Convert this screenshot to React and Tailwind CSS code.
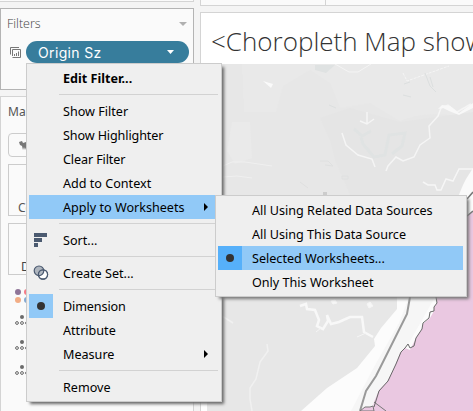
import React from 'react';

const sortIcon = (
  <svg width="14" height="14" viewBox="0 0 14 14" fill="#4b5a70">
    <path d="M0 0h13v4H0zM0 5h8v4H0zM0 10h4v4H0z" />
  </svg>
);

const setIcon = (
  <svg width="16" height="16" viewBox="0 0 16 16" fill="none">
    <circle cx="10" cy="9.5" r="4.6" fill="#fff" stroke="#4b5a70" strokeWidth="1.2" />
    <circle cx="6" cy="5.8" r="4.8" fill="#8b95a3" fillOpacity=".65" stroke="#4b5a70" strokeWidth="1.2" />
    <circle cx="10" cy="9.5" r="4.6" stroke="#4b5a70" strokeWidth="1.2" />
  </svg>
);

const dot = <span className="h-2 w-2 rounded-full bg-[#333]" />;

const items = [
  { label: 'Edit Filter...', bold: true },
  null,
  { label: 'Show Filter' },
  { label: 'Show Highlighter', tight: true },
  { label: 'Clear Filter', tight: true },
  { label: 'Add to Context' },
  { label: 'Apply to Worksheets', more: true, active: true },
  null,
  { label: 'Sort...' },
  null,
  { label: 'Create Set...' },
  null,
  { label: 'Dimension', icon: dot, checked: true, tight: true },
  { label: 'Attribute' },
  { label: 'Measure', more: true },
  null,
  { label: 'Remove' },
];
items[8].icon = sortIcon;
items[10].icon = setIcon;

const subItems = [
  { label: 'All Using Related Data Sources' },
  { label: 'All Using This Data Source' },
  { label: 'Selected Worksheets...', icon: dot, checked: true, active: true },
  { label: 'Only This Worksheet' },
];

function Row({ item }) {
  return (
    <div className={`flex h-6 items-center ${item.active ? 'bg-[#91c9f7]' : ''}`}>
      <div className={`flex h-6 w-6 shrink-0 items-center justify-center ${item.checked ? (item.active ? 'bg-[#56b0fa]' : 'bg-[#91c9f7]') : ''}`}>
        {item.icon}
      </div>
      <span className={`ml-2.5 flex-1 pt-0.5 leading-[22px] whitespace-nowrap ${item.bold ? 'font-bold' : ''} ${item.tight ? 'tracking-[-0.12px]' : ''}`}>{item.label}</span>
      {item.more && (
        <svg className="mr-[11px]" width="4" height="8" viewBox="0 0 4 8"><path d="M0 0L4 4L0 8z" fill="#000" /></svg>
      )}
    </div>
  );
}

function MapView() {
  return (
    <svg className="block" width="266" height="347" viewBox="207 64 266 347" fill="none">
      <path d="M207 64H473V411H207z" fill="#e7e7e7" />
      <path d="M242 64H473V120Q430 108 400 121L370 103 340 108 330 83 310 70 283 86 276 112 244 112z" fill="#e9e9e9" />
      <path d="M320 118L350 108 400 122 473 112V197H351L335 160 330 140z" fill="#e5e5e5" />
      <path d="M232 122H250L252 158 235 164 227 151z" fill="#eaeaea" />
      <path d="M315 65h20l-9 8-11-3z" fill="#dfe2e2" />
      <path d="M335 64l14 8h9l13-8" stroke="#f4f4f4" />
      <path d="M263 81l10 3-2 4z" fill="#fafafa" />
      <path d="M403 73l4 8 42-15" stroke="#f5f5f5" strokeDasharray="3 1" />
      <path d="M425 73l5 13 6 6M430 77l3 10M403 95l8 2M329 105l7 3M404 84l6-2" stroke="#dcdfdf" />
      <path d="M367 112v11M360 121l7 3 7-5" stroke="#f5f5f5" strokeWidth="1.5" />
      <path d="M354 129l8 7 9-5M361 137l2 7 11 13 11-2 4-20 16-2-3 13-10 8" stroke="#e0e3e3" strokeWidth="3" />
      <path d="M342 133l4 12 12 10 14 4 3 8" stroke="#f5f5f5" strokeWidth="1.5" />
      <path d="M386 171l2-5 8-9 7 4 11-4 6-12 10-7-1-12 9-10 3-8 7-3 9 7 14-8" stroke="#f5f5f5" strokeWidth="1.5" />
      <path d="M438 109l4-4 8 1 9 7 14-10v5l-14 7-10-4-6-3z" fill="#f8f8f8" />
      <path d="M423 182l5 3 7 0 2 5h4l5-11 7 2 6-12h14" stroke="#f6f6f6" strokeWidth="1.5" />
      <path d="M473 168l-7 11-3 6-5 12h15z" fill="#fafafa" />
      <path d="M223 166l9-4h13l27 4M223 177l14-1 15 2" stroke="#f0f0f0" />
      <path d="M320 161l8 0 5 5-8-1M300 182l8 6M342 176h6v3h-6z" stroke="#dfe0e0" />
      <path d="M323 192h4v4h-4z" fill="#ccc" />
      <path d="M222 316l11 7M267 344l1 7-8 11-4 17-6 9 0 11 2 12" stroke="#f1f1f1" strokeWidth="1.5" />
      <path d="M397 297V309L381 328 374 339 375 346 357 368 327 388 301 411H473V195H465z" fill="#fcfcfc" />
      <path d="M409 297L399 323 374 367 351 411H374L401 357 435 297z" fill="#f6f6f6" />
      <path d="M300 306l6-2 1 5 8 1 4 10-2 6 6 3 5-8-1-6 4 9 8-2 11-5h12l2 15 9 5" stroke="#f8f8f8" strokeWidth="2.5" />
      <path d="M367 304l3-2 3 4-4 2zM331 301l4-1 2 3-4 1zM357 337l9-4M316 332l5-4" fill="#f7f7f7" stroke="#f5f5f5" />
      <path d="M473 212L466 216V267L436 297 437 303 434 307 434 311 430 318 423 324 422 329 416 338 410 350 405 348 400 353 394 368 387 382 379 390 374 402 372 411H473z" fill="#eac8e1" />
      <path d="M436 297l1 6-3 4 0 4-4 1-1 6-6 5-1 6-6 9-2 8-4 2-2-4-3 4-4 4-5 12-8 17-9 10-5 16" stroke="#686868" />
      <path d="M410 297l-3 17-31 62-10 15-6 20" stroke="#999" strokeWidth="2" />
      <path d="M360 411l5-4 5 0 3-1 1 5z" fill="#eac8e1" stroke="#777" />
      <path d="M374 402l12 9" stroke="#777" />
      <path d="M473 192l-6 7M467 216l6-5" stroke="#777" strokeWidth="1.5" />
    </svg>
  );
}

function Separator() {
  return <div className="ml-[30px] mr-px flex h-[9px] items-center"><div className="h-px w-full bg-[#d2d2d2]" /></div>;
}

function DetailIcon() {
  return (
    <svg width="16" height="11" viewBox="0 0 16 11" fill="none">
      <circle cx="7" cy="2" r="2" fill="#6b6b6b" />
      <circle cx="2" cy="8" r="1.4" stroke="#666" />
      <circle cx="7" cy="8" r="1.4" stroke="#666" />
      <circle cx="12" cy="8" r="1.4" stroke="#666" />
    </svg>
  );
}

export default function App() {
  return (
    <div className="relative flex h-[411px] w-[473px] overflow-hidden bg-[#f4f4f4] font-['Noto_Sans',sans-serif] text-[12.6px] text-black">
      <aside className="flex w-[194px] shrink-0 flex-col">
        <div className="h-0.5 border-r border-b border-[#d4d4d4] bg-[#fafafa]" />
        <section className="mt-1.5 h-[82px] border border-[#b4b4b4] bg-[#fafafa]">
          <div className="flex h-8 items-center justify-between px-1.5 text-[#444]">
            <span className="pb-0.5 font-['Open_Sans',sans-serif] text-[12.5px] font-light">Filters</span>
            <svg className="mb-0.5" width="8" height="4" viewBox="0 0 8 4"><path d="M0 0h8L4 4z" fill="#b0b0b0" /></svg>
          </div>
          <div className="flex items-center pl-[9px]">
            <svg width="11" height="11" viewBox="0 0 11 11" fill="none" stroke="#777">
              <path d="M.5 7.500V.5H9M2.500 9V2.500H10.500V10.500H2.500M4.500 9V7M6.500 9V6M8.500 9V4.500" />
            </svg>
            <div className="ml-[5px] flex h-[22px] w-[163px] items-center justify-between rounded-full bg-[#377d9c] pr-[15px] pl-3 text-white">
              <span className="pt-px font-['Inter',sans-serif] text-[14px] tracking-[0.35px]">Origin Sz</span>
              <svg width="7" height="4" viewBox="0 0 7 4"><path d="M0 0h7L3.500 4z" fill="#fff" /></svg>
            </div>
          </div>
        </section>
        <section className="mt-1.5 flex flex-1 flex-col border border-b-0 border-[#d4d4d4] bg-[#fafafa] pl-[7px] text-[12px] text-[#555]">
          <span className="mt-1.5 h-[18px] leading-[18px]">Marks</span>
          <div className="mt-3 h-6 rounded-sm border border-[#ccc] pt-[7px] pl-2.5">
            <svg width="12" height="9" viewBox="0 0 12 9" fill="#777"><path d="M0 1l3-1 1 2 3-1 1 3-2 5-1-3-1 3-1-4-2-1z" /></svg>
          </div>
          <div className="mt-[7px] flex h-[52px] items-end border border-[#ccc] pl-[9px] leading-[15px]">Color</div>
          <div className="mt-[7px] flex h-[52px] items-end border border-[#ccc] pl-3 leading-[15px] text-[#444]">Detail</div>
          <div className="mt-3.5 ml-[7px] grid w-[15px] grid-cols-2 gap-0.5 self-start">
            <i className="h-1.5 w-1.5 rounded-full bg-[#8f7598]" /><i className="h-1.5 w-1.5 rounded-full bg-[#f67b86]" />
            <i className="h-1.5 w-1.5 rounded-full bg-[#f2ad85]" /><i className="h-1.5 w-1.5 rounded-full bg-[#85a9d2]" />
          </div>
          <div className="mt-3 ml-[7px] flex flex-col gap-3.5">
            <DetailIcon /><DetailIcon /><DetailIcon />
          </div>
        </section>
      </aside>
      <main className="ml-1.5 flex min-w-0 flex-1 flex-col">
        <div className="flex h-1.5 border-b border-l border-[#d4d4d4] bg-[#fafafa]">
          <div className="w-[125px] border-r border-[#d4d4d4]" />
        </div>
        <section className="mt-1.5 flex-1 border-t border-l border-[#d4d4d4] bg-white">
          <h1 className="h-[51px] pl-2.5 font-['Open_Sans',sans-serif] text-[26px] leading-[57px] font-light whitespace-nowrap text-[#333]">&lt;Choropleth Map show</h1>
          <div className="ml-1.5"><MapView /></div>
        </section>
      </main>
      <div className="absolute top-[63px] left-[26px] h-[339px] w-[196px] border border-[#ccc] bg-[#efefef] p-0.5 shadow-[3px_3px_3px_-1px_#666]">
        {items.map((item, i) => (item ? <Row key={i} item={item} /> : <Separator key={i} />))}
      </div>
      <div className="absolute top-[195px] left-[215px] h-[102px] w-[252px] border border-[#ccc] bg-[#efefef] p-0.5 pr-[3px] shadow-[3px_3px_3px_-1px_#777]">
        {subItems.map((item) => <Row key={item.label} item={item} />)}
      </div>
    </div>
  );
}
